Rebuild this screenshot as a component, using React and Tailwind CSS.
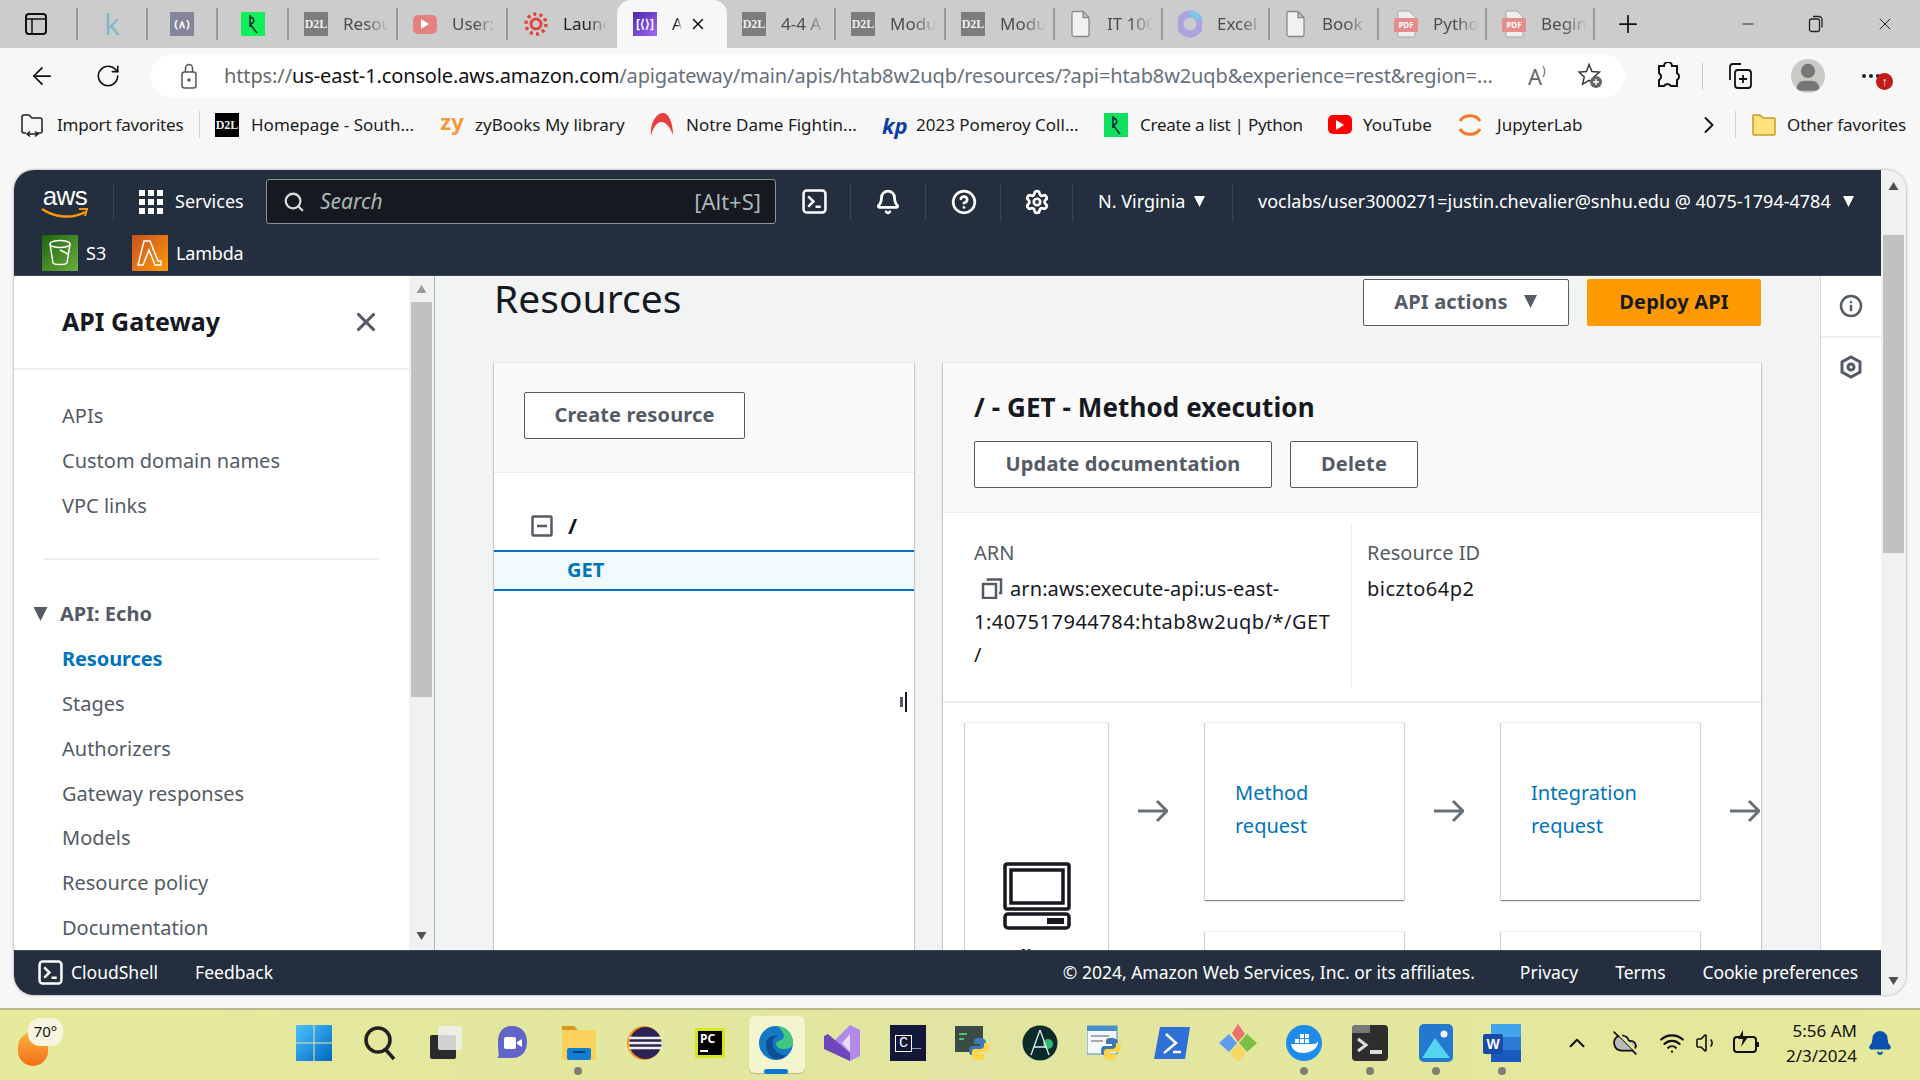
import React from 'react';
import { Search, Bell, Settings, CircleHelp, X, Info, RotateCw, ArrowLeft, ChevronRight, ChevronUp, Plus, Minus, Wifi, Volume1, CloudOff, User } from 'lucide-react';

const F = '[font-family:"Noto_Sans","Open_Sans",sans-serif]';

function Sq({ c, children, t = 'text-white' }) {
  return <span className={`w-6 h-6 shrink-0 flex items-center justify-center ${c} ${t}`}>{children}</span>;
}
const D2L = ({ dark }) => <Sq c={dark ? 'bg-black' : 'bg-[#7d7d7d]'}><span className="[font-family:'Liberation_Serif',serif] text-[12px] font-bold text-[#eee]">D2L</span></Sq>;
const GreenP = ({ bg = 'bg-[#0ff05c]' }) => <Sq c={bg}><svg width="18" height="22" viewBox="0 0 18 22" fill="none" stroke="#123" strokeWidth="1.5"><path d="M6 2v12M6 4c5 1 5 6 0 7M6 11l7 9" /></svg></Sq>;
const PageIco = () => <svg className="shrink-0" width="22" height="28" viewBox="0 0 22 28" fill="#f1f1f1" stroke="#8a8a8a" strokeWidth="1.3"><path d="M3 1.5h10l6 6v17a2 2 0 0 1-2 2H4a2 2 0 0 1-2-2v-21a2 2 0 0 1 1-2zM13 1.5v6h6" /></svg>;
const PdfIco = () => <span className="relative w-6 h-7 shrink-0 flex items-end"><svg className="absolute top-0 left-0.5" width="20" height="28" viewBox="0 0 20 28" fill="#eee" stroke="#aaa"><path d="M2 1h11l6 6v20H2z" /></svg><span className="relative w-6 h-3.5 mb-1.5 bg-[#e58d8d] text-white text-[8px] font-bold text-center leading-[14px]">PDF</span></span>;
const PlayIco = ({ c = 'bg-[#e58080]' }) => <span className={`w-6 h-[19px] shrink-0 rounded-[5px] ${c} flex items-center justify-center`}><svg width="8" height="10" viewBox="0 0 8 10" fill="#fff"><path d="M0 0l8 5-8 5z" /></svg></span>;

function Tab({ w, icon, text, center }) {
  return (
    <div className={`${w} h-full flex items-center border-r-2 border-[#a3a3a3] [border-image:linear-gradient(to_bottom,transparent_18%,#9a9a9a_18%,#9a9a9a_82%,transparent_82%)_1] ${center ? 'justify-center' : 'pl-[15px]'}`}>
      {icon}
      {text && <span className="ml-[15px] w-[46px] overflow-hidden whitespace-nowrap text-[17px] text-[#4d4d4d] [mask-image:linear-gradient(to_right,black_50%,transparent)]">{text}</span>}
    </div>
  );
}

function TabStrip() {
  return (
    <div className="h-12 bg-[#cccccc] flex items-center shrink-0">
      <div className="w-[78px] h-full flex items-center pl-[25px] border-r-2 border-[#a3a3a3] [border-image:linear-gradient(to_bottom,transparent_18%,#9a9a9a_18%,#9a9a9a_82%,transparent_82%)_1]">
        <svg width="22" height="24" viewBox="0 0 22 24" fill="none" stroke="#111" strokeWidth="2"><rect x="1" y="2" width="20" height="20" rx="3" /><path d="M1 7h20M7 7v15" strokeWidth="1.5" /></svg>
      </div>
      <Tab w="w-[70px]" center icon={<span className="text-[30px] leading-none text-[#82b8cd] [font-family:'Open_Sans',sans-serif]">k</span>} />
      <Tab w="w-[70px]" center icon={<Sq c="bg-[#85859a]"><span className="text-[11px] font-bold">(∧)</span></Sq>} />
      <Tab w="w-[71px]" center icon={<GreenP />} />
      <Tab w="w-[109px]" icon={<D2L />} text="Resou" />
      <Tab w="w-[110px]" icon={<PlayIco />} text="User:" />
      <div className="w-[109px] h-full flex items-center pl-[16px]">
        <svg className="shrink-0" width="24" height="26" viewBox="0 0 24 26" fill="none" stroke="#e0453c" strokeWidth="3.5"><circle cx="12" cy="13" r="5" strokeWidth="3" /><circle cx="12" cy="13" r="10" strokeDasharray="3 3.3" /></svg>
        <span className="ml-[15px] w-[44px] overflow-hidden whitespace-nowrap text-[17px] text-[#222] [mask-image:linear-gradient(to_right,black_55%,transparent)]">Launch</span>
      </div>
      <div className="w-[110px] h-full bg-[#f7f7f7] rounded-t-[14px] flex items-center pl-[16px]">
        <Sq c="bg-gradient-to-br from-[#4d27a8] to-[#a166ff]"><span className="text-[12px] font-bold">[⟨⟩]</span></Sq>
        <span className="ml-[15px] w-[10px] overflow-hidden text-[17px] text-[#222] [mask-image:linear-gradient(to_right,black_50%,transparent)]">A</span>
        <X size={18} className="ml-[7px] shrink-0 text-[#111]" />
      </div>
      <Tab w="w-[109px]" icon={<D2L />} text="4-4 A" />
      <Tab w="w-[110px]" icon={<D2L />} text="Modu" />
      <Tab w="w-[109px]" icon={<D2L />} text="Modu" />
      <Tab w="w-[108px]" icon={<PageIco />} text="IT 100" />
      <Tab w="w-[107px]" icon={<svg className="shrink-0" width="24" height="28" viewBox="0 0 24 28"><circle cx="12" cy="14" r="10" fill="none" stroke="#a9a3df" strokeWidth="7" /><path d="M12 4a10 10 0 0 1 9 6" stroke="#7fc6e8" strokeWidth="7" fill="none" /></svg>} text="Excel" />
      <Tab w="w-[109px]" icon={<PageIco />} text="Book" />
      <Tab w="w-[108px]" icon={<PdfIco />} text="Pytho" />
      <Tab w="w-[108px]" icon={<PdfIco />} text="Begin" />
      <Plus size={28} strokeWidth={1.5} className="ml-[19px] shrink-0 text-[#111]" />
      <Minus size={18} strokeWidth={1.3} className="ml-[97px] shrink-0 text-[#222]" />
      <svg className="ml-[51px] shrink-0" width="16" height="18" viewBox="0 0 16 18" fill="none" stroke="#222" strokeWidth="1.3"><rect x="1.5" y="4" width="10" height="12.5" rx="2" /><path d="M5 1.5h6a3 3 0 0 1 3 3v8" /></svg>
      <X size={20} strokeWidth={1.2} className="ml-[51px] shrink-0 text-[#222]" />
    </div>
  );
}

function Toolbar() {
  return (
    <div className="h-[56px] flex items-center shrink-0 relative">
      <ArrowLeft size={28} strokeWidth={1.5} className="ml-[28px] shrink-0 text-[#111]" />
      <RotateCw size={26} strokeWidth={1.5} className="ml-[39px] shrink-0 text-[#111]" />
      <div className="ml-[29px] w-[1475px] h-[44px] shrink-0 rounded-full bg-white flex items-center">
        <svg className="ml-[31px] shrink-0" width="16" height="26" viewBox="0 0 16 26" fill="none" stroke="#555" strokeWidth="1.5"><rect x="1" y="9" width="14" height="16" rx="2.5" /><path d="M4.500 9V5a3.500 3.500 0 0 1 7 0v4" /><circle cx="8" cy="17" r="1" fill="#555" /></svg>
        <span className="ml-[27px] w-[1276px] shrink-0 whitespace-nowrap text-[20px] tracking-[-0.12px] text-[#67707a] overflow-hidden"><span className="text-[#6a6a6a]">https://</span><span className="text-[#111]">us-east-1.console.aws.amazon.com</span>/apigateway/main/apis/htab8w2uqb/resources/?api=htab8w2uqb&amp;experience=rest&amp;region=...</span>
        <span className="ml-[28px] shrink-0 text-[22px] leading-none text-[#666]">A<span className="text-[12px] align-top">)</span></span>
        <svg className="ml-[30px] shrink-0" width="28" height="28" viewBox="0 0 28 28" fill="none" stroke="#333" strokeWidth="1.4"><path d="M13 2.5l3 7 7.5.6-5.7 4.9 1.7 7.3-6.5-4-6.500 4 1.800-7.300L3 10l7.500-.500z" /><circle cx="20" cy="20" r="6" fill="#666" stroke="none" /><path d="M20 17v6M17 20h6" stroke="#fff" /></svg>
      </div>
      <svg className="ml-[30px] shrink-0" width="26" height="28" viewBox="0 0 26 28" fill="none" stroke="#111" strokeWidth="2"><path d="M9 4a4 4 0 0 1 8 0h5v7a4 4 0 0 1 0 7v6h-6a4 4 0 0 0-7 0H4v-6a4 4 0 0 0 0-7V4z" /></svg>
      <span className="ml-[21px] w-px h-[27px] shrink-0 bg-[#c8c8c8]" />
      <svg className="ml-[22px] shrink-0" width="30" height="30" viewBox="0 0 30 30" fill="none" stroke="#111" strokeWidth="1.8"><path d="M5 19V6a3 3 0 0 1 3-3h8" /><rect x="10" y="9" width="16" height="18" rx="3" /><path d="M18 14v8M14 18h8" /></svg>
      <span className="ml-[36px] w-[34px] h-[34px] shrink-0 rounded-full bg-[#c9c9c5] flex items-center justify-center overflow-hidden">
        <User size={34} fill="#777" stroke="#777" className="mt-1" />
      </span>
      <span className="relative ml-[37px] w-[20px] flex gap-[3px] shrink-0">
        <span className="w-[4px] h-[4px] rounded-full bg-[#222]" />
        <span className="w-[4px] h-[4px] rounded-full bg-[#222]" />
        <span className="w-[4px] h-[4px] rounded-full bg-[#222]" />
        <span className="absolute left-[14px] top-[-1px] w-[17px] h-[17px] rounded-full bg-[#c51a1a] text-white text-[12px] font-bold flex items-center justify-center leading-none">↑</span>
      </span>
    </div>
  );
}

function Bm({ ml, icon, text, tw, gap = 'ml-[12px]' }) {
  return <div className={`${ml} flex items-center shrink-0`}>{icon}<span className={`${gap} ${tw} whitespace-nowrap text-[17px] text-[#1c1c1c]`}>{text}</span></div>;
}

function Bookmarks() {
  return (
    <div className="h-[41px] flex items-center shrink-0">
      <svg className="ml-[20px] shrink-0" width="24" height="26" viewBox="0 0 24 26" fill="none" stroke="#222" strokeWidth="1.5"><path d="M6 21H4a2 2 0 0 1-2-2V5a2 2 0 0 1 2-2h5l3 3h8a2 2 0 0 1 2 2v10a2 2 0 0 1-2 3h-3" /><path d="M8 22h9M10 19.500l-3 2.500 3 2.500M15 19.500l3 2.500-3 2.500" /></svg>
      <span className="ml-[13px] w-[126px] shrink-0 text-[17px] tracking-[-0.2px] text-[#1c1c1c] whitespace-nowrap">Import favorites</span>
      <span className="ml-[16px] w-px h-[27px] shrink-0 bg-[#d0d0d0]" />
      <Bm ml="ml-[15px]" tw="w-[164px]" icon={<D2L dark />} text="Homepage - South..." />
      <Bm ml="ml-[25px]" tw="w-[150px]" gap="ml-[11px]" icon={<span className="w-6 text-center text-[22px] leading-none font-bold text-[#f19a3c] -mt-2">zy</span>} text="zyBooks My library" />
      <Bm ml="ml-[25px]" tw="w-[170px]" icon={<svg className="shrink-0" width="24" height="26" viewBox="0 0 24 26"><path d="M1 24C0 8 8 1 13 1c5 0 10 8 10 22C19 12 13 8 8 11c-4 3-6 8-7 13z" fill="#e8413c" /></svg>} text="Notre Dame Fightin..." />
      <Bm ml="ml-[26px]" tw="w-[164px]" gap="ml-[10px]" icon={<span className="w-6 text-center text-[22px] leading-none font-bold italic text-[#0f3fa8]">kp</span>} text="2023 Pomeroy Coll..." />
      <Bm ml="ml-[24px]" tw="w-[163px] tracking-[-0.25px]" icon={<GreenP bg="bg-[#10e060]" />} text="Create a list | Python" />
      <Bm ml="ml-[25px]" tw="w-[69px]" gap="ml-[11px]" icon={<PlayIco c="bg-[#f00]" />} text="YouTube" />
      <Bm ml="ml-[25px]" tw="w-[86px]" gap="ml-[14px]" icon={<svg className="shrink-0" width="26" height="28" viewBox="0 0 26 28" fill="none" stroke="#f37726" strokeWidth="3"><path d="M3 10c4-7 16-7 20 0M3 18c4 7 16 7 20 0" /></svg>} text="JupyterLab" />
      <ChevronRight size={28} strokeWidth={1.6} className="ml-[112px] shrink-0 text-[#111]" />
      <span className="ml-[12px] w-px h-[27px] shrink-0 bg-[#d0d0d0]" />
      <svg className="ml-[15px] shrink-0" width="26" height="24" viewBox="0 0 26 24" fill="#fde27e" stroke="#c99a20" strokeWidth="1.500"><path d="M2 3a1 1 0 0 1 1-1h6l3 3h11a1 1 0 0 1 1 1v15a1 1 0 0 1-1 1H3a1 1 0 0 1-1-1z" /></svg>
      <span className="ml-[10px] shrink-0 text-[17px] tracking-[-0.1px] text-[#1c1c1c] whitespace-nowrap">Other favorites</span>
    </div>
  );
}

const Caret = ({ c = '#fff', w = 11, h = 11, className = '' }) => <svg className={`shrink-0 ${className}`} width={w} height={h} viewBox="0 0 10 10" fill={c}><path d="M0 0h10L5 10z" /></svg>;
const Sep = ({ ml }) => <span className={`${ml} w-px h-[38px] shrink-0 bg-[#37475a]`} />;
const Shell = ({ className = '', size = 25 }) => <svg className={`shrink-0 ${className}`} width={size} height={size} viewBox="0 0 24 24" fill="none" stroke="#fff" strokeWidth="2.400"><rect x="1.500" y="1.500" width="21" height="21" rx="3" /><path d="M6 7l5 5-5 5M13 17h5" /></svg>;

function AwsHeader() {
  return (
    <div className="h-[106px] bg-[#232f3e] shrink-0 border-b border-[#414750] text-white">
      <div className="h-[63px] flex items-center">
        <div className="ml-[27px] w-[48px] flex flex-col items-center">
          <span className="text-[26px] leading-[22px] font-normal tracking-[-0.5px] [font-family:'Liberation_Sans',sans-serif]">aws</span>
          <svg width="48" height="12" viewBox="0 0 48 12" fill="none"><path d="M1 2c13 9 31 10 43 3" stroke="#f90" strokeWidth="2.500" /><path d="M38 2l8 0-2 7" stroke="#f90" strokeWidth="2" /></svg>
        </div>
        <Sep ml="ml-[24px]" />
        <div className="ml-[25px] grid grid-cols-3 gap-[3px]">
          {Array.from({ length: 9 }).map((_, i) => <span key={i} className="w-[6px] h-[6px] bg-white" />)}
        </div>
        <span className="ml-[12px] w-[67px] text-[18px] whitespace-nowrap">Services</span>
        <div className="ml-[24px] w-[510px] h-[45px] bg-[#16191f] border border-[#879596] rounded-[3px] flex items-center text-[#aab7b8]">
          <Search size={22} strokeWidth={2.500} className="ml-[16px] text-[#d5dbdb]" />
          <span className="ml-[15px] italic text-[21px] flex-1">Search</span>
          <span className="mr-[14px] text-[22px]">[Alt+S]</span>
        </div>
        <Shell className="ml-[26px]" />
        <Sep ml="ml-[23px]" />
        <Bell size={26} strokeWidth={2.500} className="ml-[24px] shrink-0" />
        <Sep ml="ml-[24px]" />
        <CircleHelp size={26} strokeWidth={2.500} className="ml-[25px] shrink-0" />
        <Sep ml="ml-[23px]" />
        <Settings size={26} strokeWidth={2.500} className="ml-[23px] shrink-0" />
        <Sep ml="ml-[22px]" />
        <span className="ml-[25px] w-[86px] text-[18px] whitespace-nowrap">N. Virginia</span>
        <Caret className="ml-[10px]" />
        <Sep ml="ml-[27px]" />
        <span className="ml-[25px] w-[575px] text-[18px] whitespace-nowrap">voclabs/user3000271=justin.chevalier@snhu.edu @ 4075-1794-4784</span>
        <Caret className="ml-[10px]" />
      </div>
      <div className="h-[40px] flex items-center">
        <span className="ml-[28px] w-9 h-9 bg-gradient-to-br from-[#1b660f] to-[#6cae3e] flex items-center justify-center">
          <svg width="24" height="28" viewBox="0 0 24 28" fill="none" stroke="#fff" strokeWidth="1.500"><ellipse cx="12" cy="5" rx="10" ry="3.500" /><path d="M2 5l3 19c1 2 13 2 14 0l3-19M12 11l8 4" /></svg>
        </span>
        <span className="ml-[8px] w-[26px] text-[18px]">S3</span>
        <span className="ml-[20px] w-9 h-9 bg-gradient-to-br from-[#c8511b] to-[#ff9900] flex items-center justify-center">
          <svg width="26" height="28" viewBox="0 0 26 28" fill="none" stroke="#fff" strokeWidth="1.500"><path d="M7 2h6l8 20h3v4h-6L12 11 6 26H1z" /></svg>
        </span>
        <span className="ml-[8px] text-[18px] tracking-[-0.2px]">Lambda</span>
      </div>
    </div>
  );
}

function NavI({ children, active }) {
  return <div className={`h-[45px] flex items-center pl-[48px] text-[20px] whitespace-nowrap ${active ? 'text-[#0073bb] font-bold tracking-[-0.1px]' : 'text-[#545b64]'}`}>{children}</div>;
}

function Sidebar() {
  return (
    <div className="w-[421px] shrink-0 flex border-r border-[#aab7b8] overflow-hidden">
      <div className="w-[396px] bg-white flex flex-col">
        <div className="h-[94px] shrink-0 border-b-2 border-[#eaeded] pl-[48px] pr-[28px] flex items-center justify-between">
          <span className="text-[25px] font-bold text-[#16191f]">API Gateway</span>
          <X size={30} strokeWidth={2.500} className="text-[#545b64]" />
        </div>
        <div className="pt-[23px]">
          <NavI>APIs</NavI><NavI>Custom domain names</NavI><NavI>VPC links</NavI>
        </div>
        <div className="mt-[30px] mx-[30px] h-[2px] shrink-0 bg-[#eaeded]" />
        <div className="mt-[31px] h-[46px] shrink-0 pb-[1px] pl-[19px] flex items-center text-[20px] font-bold text-[#545b64]">
          <Caret c="#545b64" w={15} h={14} /><span className="ml-[12px]">API: Echo</span>
        </div>
        <NavI active>Resources</NavI><NavI>Stages</NavI><NavI>Authorizers</NavI><NavI>Gateway responses</NavI><NavI>Models</NavI><NavI>Resource policy</NavI><NavI>Documentation</NavI>
      </div>
      <div className="w-[25px] bg-[#f1f1f1] flex flex-col items-center relative">
        <svg className="mt-[9px]" width="11" height="8" viewBox="0 0 10 8" fill="#9a9a9a"><path d="M5 0l5 8H0z" /></svg>
        <div className="mt-[9px] w-[21px] h-[395px] bg-[#c1c1c1]" />
        <svg className="absolute bottom-[10px]" width="11" height="8" viewBox="0 0 10 8" fill="#505050"><path d="M0 0h10L5 8z" /></svg>
      </div>
    </div>
  );
}

const Btn = ({ className = '', children }) => <div className={`h-[47px] shrink-0 bg-white border border-[#545b64] rounded-[2px] pb-[2px] flex items-center justify-center text-[20px] tracking-[0.15px] font-bold text-[#545b64] whitespace-nowrap ${className}`}>{children}</div>;
const panel = 'bg-white border-t border-[#eaeded] shadow-[0_1px_1px_0_rgba(0,28,36,0.3),1px_1px_1px_0_rgba(0,28,36,0.15),-1px_1px_1px_0_rgba(0,28,36,0.15)]';

const Arrow = ({ className = '' }) => <svg className={className} width="30" height="24" viewBox="0 0 30 24" fill="none" stroke="#687078" strokeWidth="3"><path d="M0 12h28M19 2l10 10-10 10" /></svg>;

function FlowCard({ a, b }) {
  return (
    <div className={`w-[199px] h-[178px] ${panel} pl-[30px] flex flex-col justify-center text-[#0073bb] text-[20px] leading-[33px] pb-[5px]`}>
      <span>{a}</span><span>{b}</span>
    </div>
  );
}

function Main() {
  return (
    <div className="flex-1 min-w-0 bg-[#f2f3f3] pl-[59px] pr-[59px] flex flex-col overflow-hidden">
      <div className="h-[86px] shrink-0 flex items-start justify-between">
        <span className="text-[39px] leading-[48px] -mt-[2px] text-[#16191f]">Resources</span>
        <div className="flex gap-[18px] mt-[3px]">
          <Btn className="w-[206px]">API actions<Caret c="#545b64" w={15} h={13} className="ml-[15px]" /></Btn>
          <div className="w-[174px] h-[47px] pb-[2px] rounded-[2px] bg-[#ff9900] flex items-center justify-center text-[20px] tracking-[0.15px] font-bold text-[#16191f]">Deploy API</div>
        </div>
      </div>
      <div className="flex-1 min-h-0 flex gap-[29px]">
        <div className={`w-[420px] shrink-0 ${panel} relative`}>
          <div className="h-[110px] bg-[#fafafa] border-b border-[#eaeded] pl-[30px] pt-[29px]">
            <Btn className="w-[221px]">Create resource</Btn>
          </div>
          <div className="h-[77px] pl-[37px] pt-[41px] flex items-start">
            <svg className="mt-[1px]" width="22" height="22" viewBox="0 0 22 22" fill="none" stroke="#545b64" strokeWidth="2.500"><rect x="1.500" y="1.500" width="19" height="19" rx="1" /><path d="M6 11h10" /></svg>
            <span className="ml-[15px] text-[22px] leading-[22px] font-bold text-[#16191f]">/</span>
          </div>
          <div className="h-[41px] pb-[2px] bg-[#f1faff] border-y-2 border-[#0073bb] pl-[73px] flex items-center text-[20px] font-bold text-[#0073bb]">GET</div>
          <div className="absolute left-[406px] top-[329px] flex items-center gap-[2px]"><span className="w-[3px] h-[10px] bg-[#545b64]" /><span className="w-[2px] h-[20px] bg-[#16191f]" /></div>
        </div>
        <div className={`w-[818px] shrink-0 ${panel} overflow-hidden`}>
          <div className="h-[150px] bg-[#fafafa] border-b border-[#eaeded] pl-[31px] pt-[26px]">
            <div className="text-[26px] leading-[36px] tracking-[0.1px] font-bold text-[#16191f]">/ - GET - Method execution</div>
            <div className="flex gap-[18px] mt-[16px]">
              <Btn className="w-[298px]">Update documentation</Btn>
              <Btn className="w-[128px]">Delete</Btn>
            </div>
          </div>
          <div className="h-[190px] border-b-2 border-[#eaeded] flex pt-[10px] text-[20px] leading-[33px]">
            <div className="w-[409px] h-[165px] border-r border-[#eaeded] pl-[31px] pt-[13px] text-[#16191f]">
              <div className="text-[#545b64]">ARN</div>
              <div className="mt-[3px] whitespace-nowrap">
                <svg className="inline-block mx-[7px] align-[-3px]" width="22" height="21" viewBox="0 0 22 21" fill="none" stroke="#545b64" strokeWidth="2.500"><rect x="2" y="6" width="13" height="14" /><path d="M7 3V1.500h13V15h-2" /></svg>
                <span className="tracking-[0.1px]">arn:aws:execute-api:us-east-</span><br />
                <span className="tracking-[0.5px]">1:407517944784:htab8w2uqb/*/GET</span><br />
                <span>/</span>
              </div>
            </div>
            <div className="pl-[15px] pt-[13px]">
              <div className="text-[#545b64]">Resource ID</div>
              <div className="mt-[3px] tracking-[0.5px] text-[#16191f]">biczto64p2</div>
            </div>
          </div>
          <div className="pt-[19px] pl-[22px] flex items-start h-[260px]">
            <div className={`w-[143px] h-[240px] ${panel} shrink-0 flex flex-col items-center pt-[139px]`}>
              <svg className="shrink-0" width="68" height="68" viewBox="0 0 68 68" fill="none" stroke="#16191f" strokeWidth="3.500"><rect x="2" y="2" width="64" height="45" rx="2" /><rect x="8" y="8" width="52" height="33" /><rect x="2" y="52" width="64" height="14" rx="3" /><path d="M44 59h17" strokeWidth="6" /></svg>
              <span className="mt-[12px] shrink-0 text-[20px] font-bold text-[#16191f]">Client</span>
            </div>
            <div className="flex flex-col gap-[31px]">
              <div className="flex items-start">
                <Arrow className="ml-[30px] mt-[77px] shrink-0 w-[30px]" />
                <div className="ml-[37px] shrink-0"><FlowCard a="Method" b="request" /></div>
                <Arrow className="ml-[30px] mt-[77px] shrink-0" />
                <div className="ml-[37px] shrink-0"><FlowCard a="Integration" b="request" /></div>
                <Arrow className="ml-[30px] mt-[77px] shrink-0" />
              </div>
              <div className="flex">
                <div className={`ml-[97px] w-[199px] h-[60px] ${panel}`} />
                <div className={`ml-[97px] w-[199px] h-[60px] ${panel}`} />
              </div>
            </div>
          </div>
        </div>
      </div>
    </div>
  );
}

function RightRail() {
  return (
    <div className="w-[61px] shrink-0 bg-white border-l border-[#d5dbdb] flex flex-col">
      <div className="h-[62px] border-b-2 border-[#eaeded] flex items-center justify-center pb-[1px]"><Info size={24} strokeWidth={2.500} className="text-[#545b64]" /></div>
      <div className="flex justify-center pt-[17px]">
        <svg width="24" height="24" viewBox="0 0 24 24" fill="none" stroke="#545b64" strokeWidth="3"><path d="M12 2l9 5v10l-9 5-9-5V7z" /><circle cx="12" cy="12" r="3" /></svg>
      </div>
    </div>
  );
}

function Footer() {
  return (
    <div className="h-[45px] pb-[2px] bg-[#232f3e] border-t border-[#414750] shrink-0 flex items-center text-white text-[17.5px] whitespace-nowrap">
      <Shell className="ml-[24px]" />
      <span className="ml-[8px]">CloudShell</span>
      <span className="ml-[37px]">Feedback</span>
      <span className="ml-auto">© 2024, Amazon Web Services, Inc. or its affiliates.</span>
      <span className="ml-[45px]">Privacy</span>
      <span className="ml-[37px]">Terms</span>
      <span className="ml-[37px] mr-[23px] tracking-[-0.15px]">Cookie preferences</span>
    </div>
  );
}

function AwsWindow() {
  return (
    <div className="ml-[14px] mt-[1px] w-[1892px] h-[825px] shrink-0 flex rounded-t-[20px] rounded-b-[20px] overflow-hidden shadow-[0_0_3px_rgba(0,0,0,0.4)]">
      <div className="w-[1867px] flex flex-col">
        <AwsHeader />
        <div className="flex-1 min-h-0 flex">
          <Sidebar />
          <Main />
          <RightRail />
        </div>
        <Footer />
      </div>
      <div className="w-[25px] bg-[#f1f1f1] relative flex flex-col items-center">
        <svg className="mt-[12px]" width="11" height="8" viewBox="0 0 10 8" fill="#505050"><path d="M5 0l5 8H0z" /></svg>
        <div className="mt-[45px] w-[21px] h-[318px] bg-[#c1c1c1]" />
        <svg className="absolute bottom-[10px]" width="11" height="8" viewBox="0 0 10 8" fill="#505050"><path d="M0 0h10L5 8z" /></svg>
      </div>
    </div>
  );
}

const Py = ({ x = 14, y = 14 }) => <g transform={`translate(${x} ${y})`}><path d="M10 0c-5 0-5 2-5 4v2h6v2H3c-2 0-3 2-3 5s1 4 3 4h2v-3c0-2 2-3 4-3h5c2 0 3-1 3-3V4c0-2-2-4-7-4z" fill="#3d7ab5" /><path d="M10 22c5 0 5-2 5-4v-2H9v-2h8c2 0 3-2 3-5s-1-4-3-4h-2v3c0 2-2 3-4 3H6c-2 0-3 1-3 3v4c0 2 2 4 7 4z" fill="#ffd545" /></g>;

const taskIcons = [
  { k: 'win', n: <svg width="36" height="36" viewBox="0 0 36 36"><defs><linearGradient id="w" x1="0" y1="0" x2="1" y2="1"><stop offset="0" stopColor="#4cc2ff" /><stop offset="1" stopColor="#0067c0" /></linearGradient></defs><path d="M0 0h17.500v17.500H0zM18.500 0H36v17.500H18.500zM0 18.500h17.500V36H0zM18.500 18.500H36V36H18.500z" fill="url(#w)" /></svg> },
  { k: 's', n: <svg width="36" height="36" viewBox="0 0 36 36" fill="none" stroke="#222" strokeWidth="3.500"><circle cx="16" cy="15" r="12" /><path d="M24 25l8 9" /></svg> },
  { k: 't', n: <svg width="36" height="36" viewBox="0 0 36 36"><rect x="2" y="10" width="26" height="24" rx="2" fill="#2b2b2b" /><rect x="10" y="1" width="24" height="24" rx="2" fill="#eee" opacity="0.85" /></svg> },
  { k: 'te', n: <svg width="36" height="36" viewBox="0 0 36 36"><path d="M18 1c10 0 15 7 15 16 0 10-6 16-15 16H3c3-2 1-4 1-16C4 8 8 1 18 1z" fill="#6264c8" /><rect x="10" y="12" width="12" height="12" rx="2" fill="#fff" /><path d="M23 17l5-3v8l-5-3z" fill="#fff" /></svg>, dot: 0 },
  { k: 'f', dot: 1, n: <svg width="36" height="36" viewBox="0 0 36 36"><path d="M2 1h12l4 4H2z" fill="#d79a1a" /><rect x="2" y="5" width="34" height="30" fill="#fad15a" /><rect x="7" y="23" width="24" height="12" rx="2" fill="#0f7fd4" /><rect x="13" y="26" width="12" height="2" fill="#083c6e" /></svg> },
  { k: 'e', n: <svg width="36" height="36" viewBox="0 0 36 36"><circle cx="18" cy="18" r="17" fill="#f7941e" /><circle cx="19.500" cy="18" r="16" fill="#2c2255" /><path d="M3 13h33M3 18h33M3 23h33" stroke="#eee" strokeWidth="2.500" /></svg> },
  { k: 'p', n: <span className="w-[30px] h-[30px] bg-black border-[3px] border-[#d7e51c] text-white text-[12px] font-bold leading-none pl-[2px] pt-[2px] flex flex-col">PC<span className="mt-[5px] w-[8px] h-[2px] bg-white" /></span> },
  { k: 'ed', active: 1, n: <svg width="36" height="38" viewBox="0 0 36 38"><circle cx="18" cy="19" r="17" fill="#1578c2" /><path d="M18 2c10 0 17 7 17 17 0 5-5 6-10 6-4 0-7-3-7-5 0-4 8-3 8-8 0-3-5-10-8-10z" fill="#41c880" /><path d="M8 20c0-6 6-10 12-8-4 1-6 4-5 9 1 6 7 11 14 10-4 4-10 5-14 3-4-2-7-8-7-14z" fill="#0d4e97" /></svg> },
  { k: 'v', n: <svg width="36" height="38" viewBox="0 0 36 38"><path d="M26 1l10 5v26l-10 5L8 19z" fill="#b18ae8" /><path d="M0 12l4-2 22 19v8L0 25z" fill="#6e47b8" /><path d="M26 10v18l-8-9z" fill="#e8dcf7" /></svg> },
  { k: 'c', n: <span className="w-9 h-9 bg-[#13183a] flex items-center justify-center text-white text-[15px] leading-none [font-family:'Liberation_Mono',monospace]"><span className="border border-white px-[3px]">C</span>_</span> },
  { k: 'pd', n: <svg width="38" height="38" viewBox="0 0 38 38"><rect x="0" y="2" width="28" height="26" fill="#3c4a45" /><path d="M4 10h8M4 15h5" stroke="#46c56e" strokeWidth="2" /><Py /></svg> },
  { k: 'as', n: <svg width="36" height="38" viewBox="0 0 36 38"><circle cx="18" cy="19" r="17.500" fill="#0b2a2a" /><circle cx="26" cy="20" r="5" fill="#3ddc84" opacity="0.8" /><path d="M18 6L9 31M18 6l9 25M12 23h12" stroke="#e0f0f0" strokeWidth="1.300" fill="none" /></svg> },
  { k: 'id', n: <svg width="38" height="38" viewBox="0 0 38 38"><rect x="0" y="2" width="30" height="28" fill="#f4f7fb" stroke="#4a90c8" /><rect x="0" y="2" width="30" height="5" fill="#4a90c8" /><path d="M4 12h18M4 17h12" stroke="#aaa" strokeWidth="2" /><Py x={14} y={14} /></svg> },
  { k: 'ps', n: <svg width="36" height="36" viewBox="0 0 36 36"><path d="M6 2h30l-5 32H0z" fill="#2f6fd6" /><path d="M12 9l10 9-12 10M19 27h8" stroke="#fff" strokeWidth="2.500" fill="none" /></svg> },
  { k: 'g', n: <svg width="38" height="38" viewBox="0 0 38 38"><path d="M19 0l7 10-7 8-6-9z" fill="#ef6f6c" /><path d="M0 19l10-9 8 9-8 9z" fill="#5f9cf2" /><path d="M28 10l10 9-10 9-8-9z" fill="#7bc043" /><path d="M19 20l8 9-8 9-8-9z" fill="#f6d860" /></svg> },
  { k: 'd', dot: 1, n: <svg width="36" height="38" viewBox="0 0 36 38"><circle cx="18" cy="19" r="18" fill="#1d8ceb" /><path d="M5 20h22c3 0 4-1 5-3 1 6-6 12-15 12-6 0-11-3-12-9z" fill="#fff" /><path d="M9 15h4v4H9zM14 15h4v4h-4zM19 15h4v4h-4zM14 10h4v4h-4zM19 10h4v4h-4z" fill="#fff" /></svg> },
  { k: 'tm', dot: 1, n: <svg width="36" height="36" viewBox="0 0 36 36"><rect width="36" height="36" rx="4" fill="#2e2e2e" /><path d="M0 4a4 4 0 0 1 4-4h14v8H0z" fill="#777" /><path d="M6 14l8 6-8 6" stroke="#ddd" strokeWidth="3" fill="none" /><rect x="18" y="25" width="12" height="4" fill="#ddd" /></svg> },
  { k: 'ph', dot: 1, n: <svg width="34" height="38" viewBox="0 0 34 38"><rect width="34" height="38" rx="5" fill="#2379cf" /><path d="M3 34l13-20 15 20z" fill="#53d4ef" /><circle cx="25" cy="10" r="3.500" fill="#e5f2fb" /></svg> },
  { k: 'wd', dot: 1, n: <svg width="38" height="38" viewBox="0 0 38 38"><rect x="8" y="0" width="30" height="13" fill="#41a5ee" /><rect x="8" y="13" width="30" height="13" fill="#2b7cd3" /><rect x="8" y="26" width="30" height="12" fill="#185abd" /><rect x="0" y="10" width="20" height="20" rx="2" fill="#1a4aa8" /><text x="10" y="25" fontSize="14" fontWeight="700" fill="#fff" textAnchor="middle" fontFamily="Liberation Sans">W</text></svg> },
];

function TaskCell({ t }) {
  return (
    <div className="w-[66px] h-full flex items-center justify-center relative">
      {t.active ? <div className="absolute left-[6px] top-[6px] w-[56px] h-[57px] rounded-[6px] bg-[#f3f5cf] shadow-[0_1px_1px_rgba(0,0,0,0.2)]" /> : null}
      <span className="relative -mt-[4px] flex items-center justify-center">{t.n}</span>
      {t.dot ? <span className="absolute bottom-[5px] w-[8px] h-[8px] rounded-full bg-[#7d8070]" /> : null}
      {t.active ? <span className="absolute bottom-[6px] w-[24px] h-[5px] rounded-full bg-[#0a78d4]" /> : null}
    </div>
  );
}

function Taskbar() {
  return (
    <div className="mt-auto h-[72px] shrink-0 border-t-2 border-[#b8ba8c] bg-gradient-to-r from-[#e6ea9c] via-[#e5eb94] to-[#e6e99b] flex items-center relative text-[#111]">
      <div className="absolute inset-0 bg-gradient-to-r from-transparent via-[#dcdcb4] to-transparent opacity-40" />
      <div className="relative ml-[18px] w-[31px] h-[35px] mt-[8px]">
        <span className="block w-[30px] h-[34px] rounded-full bg-gradient-to-b from-[#fbb040] to-[#f36f14]" />
        <span className="absolute left-[10px] -top-[14px] w-[35px] h-[28px] rounded-[12px] bg-[#f7f5de] flex items-center justify-center text-[15px]">70°</span>
      </div>
      <div className="relative ml-[232px] flex h-full">
        {taskIcons.map(t => <TaskCell key={t.k} t={t} />)}
      </div>
      <ChevronUp size={26} strokeWidth={1.8} className="relative ml-[29px] -mt-[4px]" />
      <CloudOff size={26} strokeWidth={1.6} fill="#bbb" className="relative ml-[22px] -mt-[4px]" />
      <Wifi size={26} strokeWidth={2} className="relative ml-[21px] -mt-[4px]" />
      <Volume1 size={24} strokeWidth={1.6} className="relative ml-[10px] -mt-[4px]" />
      <svg className="relative ml-[13px] -mt-[4px]" width="28" height="26" viewBox="0 0 28 26" fill="none" stroke="#111" strokeWidth="2"><rect x="2" y="7" width="22" height="15" rx="3" /><path d="M26 12v5" /><path d="M11 0L6 9h5l-2 8 7-10h-5z" fill="#111" stroke="none" /></svg>
      <div className="relative ml-[11px] w-[86px] flex flex-col items-end text-[17px] leading-[25px] -mt-[4px] whitespace-nowrap">
        <span>5:56 AM</span><span>2/3/2024</span>
      </div>
      <Bell size={26} fill="#0b4fb0" stroke="#0b4fb0" className="relative ml-[10px] -mt-[4px]" />
    </div>
  );
}

export default function App() {
  return (
    <div className={`w-[1920px] h-[1080px] overflow-hidden bg-[#f7f7f7] flex flex-col ${F}`}>
      <TabStrip />
      <Toolbar />
      <Bookmarks />
      <div className="h-[24px] shrink-0" />
      <AwsWindow />
      <Taskbar />
    </div>
  );
}
